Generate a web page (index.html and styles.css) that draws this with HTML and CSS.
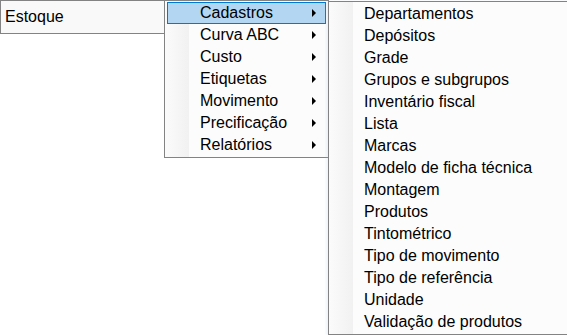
FILE: index.html
```html
<!DOCTYPE html>
<html lang="pt-BR">
<head>
    <meta charset="UTF-8">
    <title>Estoque</title>
    <link rel="stylesheet" href="styles.css">
</head>
<body>
    <div class="menubar">
        <div class="root">Estoque</div>

        <ul class="submenu level1">
            <li class="item active">Cadastros<span class="arrow"></span></li>
            <li class="item">Curva ABC<span class="arrow"></span></li>
            <li class="item">Custo<span class="arrow"></span></li>
            <li class="item">Etiquetas<span class="arrow"></span></li>
            <li class="item">Movimento<span class="arrow"></span></li>
            <li class="item">Precificação<span class="arrow"></span></li>
            <li class="item">Relatórios<span class="arrow"></span></li>
        </ul>

        <ul class="submenu level2">
            <li class="item">Departamentos</li>
            <li class="item">Depósitos</li>
            <li class="item">Grade</li>
            <li class="item">Grupos e subgrupos</li>
            <li class="item">Inventário fiscal</li>
            <li class="item">Lista</li>
            <li class="item">Marcas</li>
            <li class="item">Modelo de ficha técnica</li>
            <li class="item">Montagem</li>
            <li class="item">Produtos</li>
            <li class="item">Tintométrico</li>
            <li class="item">Tipo de movimento</li>
            <li class="item">Tipo de referência</li>
            <li class="item">Unidade</li>
            <li class="item">Validação de produtos</li>
        </ul>
    </div>
</body>
</html>
```

FILE: styles.css
```css
html, body {
    margin: 0;
    height: 100%;
    overflow: hidden;
    background-color: #fff;
    font-family: "Liberation Sans", Arial, sans-serif;
    font-size: 16px;
    color: #000;
}
.menubar {
    display: flex;
    align-items: flex-start;
}
.root {
    flex-shrink: 0;
    box-sizing: border-box;
    width: 165px;
    height: 34px;
    padding-left: 4px;
    display: flex;
    align-items: center;
    border: 1px solid #838383;
    background-color: #f9f9f9;
}
.submenu {
    flex-shrink: 0;
    list-style: none;
    margin: 0 0 0 -1px;
    padding: 1px;
    border: 1px solid #838383;
    /* faixa lateral (gutter) com degradê */
    background: linear-gradient(to right, #fbfbfb 0, #f1f1f1 24px, #fcfcfc 24px);
}
.level1 {
    box-sizing: border-box;
    width: 165px;
}
.level2 {
    width: 260px;
    margin-top: 1px;
    box-shadow: -2px 0 2px rgba(150, 180, 220, 0.15);
}
.item {
    box-sizing: border-box;
    height: 22px;
    margin: 0 1px;
    padding-left: 32px;
    display: flex;
    align-items: center;
    border: 1px solid transparent;
    white-space: nowrap;
}
.item.active {
    background-color: #b3d7f3;
    border-color: #0078d7;
}
.arrow {
    margin-left: auto;
    margin-right: 9px;
    width: 0;
    height: 0;
    border-left: 4px solid #000;
    border-top: 4px solid transparent;
    border-bottom: 4px solid transparent;
}
```
